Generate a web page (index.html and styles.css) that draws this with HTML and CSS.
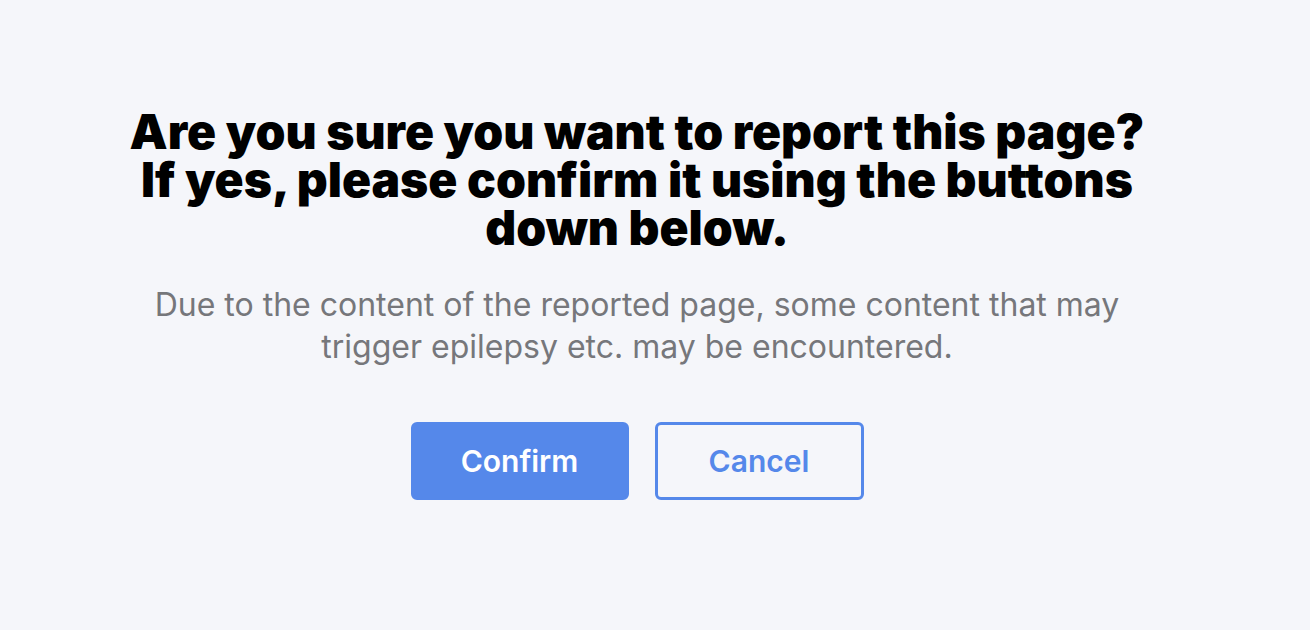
FILE: index.html
```html
<!DOCTYPE html>
<html lang="en">
<head>
<meta charset="utf-8">
<link rel="stylesheet" href="styles.css">
</head>
<body>
<main class="page">
  <section class="dialog">
    <h1 class="title">Are you sure you want to report this page?<br>If yes, please confirm it using the buttons<br>down below.</h1>
    <p class="desc">Due to the content of the reported page, some content that may<br>trigger epilepsy etc. may be encountered.</p>
    <div class="actions">
      <button class="btn btn-primary">Confirm</button>
      <button class="btn btn-outline">Cancel</button>
    </div>
  </section>
</main>
</body>
</html>
```
FILE: styles.css
```css
html, body {
  margin: 0;
  padding: 0;
  background: #f5f6fa;
  font-family: Inter, "Noto Sans", sans-serif;
}
.page {
  width: 1274px;
  padding-top: 108px;
}
.dialog {
  display: flex;
  flex-direction: column;
  align-items: center;
  text-align: center;
}
.title {
  margin: 0;
  font-size: 48px;
  font-weight: 900;
  line-height: 48px;
  color: #000;
}
.desc {
  margin: 32px 0 0;
  font-size: 32px;
  line-height: 42px;
  color: #76777b;
}
.actions {
  display: flex;
  gap: 26px;
  margin-top: 54px;
}
.btn {
  height: 78px;
  border-radius: 6px;
  font-family: Inter, sans-serif;
  font-size: 30px;
  font-weight: 600;
  cursor: pointer;
}
.btn-primary {
  width: 218px;
  background: #5588ea;
  border: 3px solid #5588ea;
  color: #fff;
}
.btn-outline {
  width: 209px;
  background: transparent;
  border: 3px solid #5588ea;
  color: #5588ea;
}
```
